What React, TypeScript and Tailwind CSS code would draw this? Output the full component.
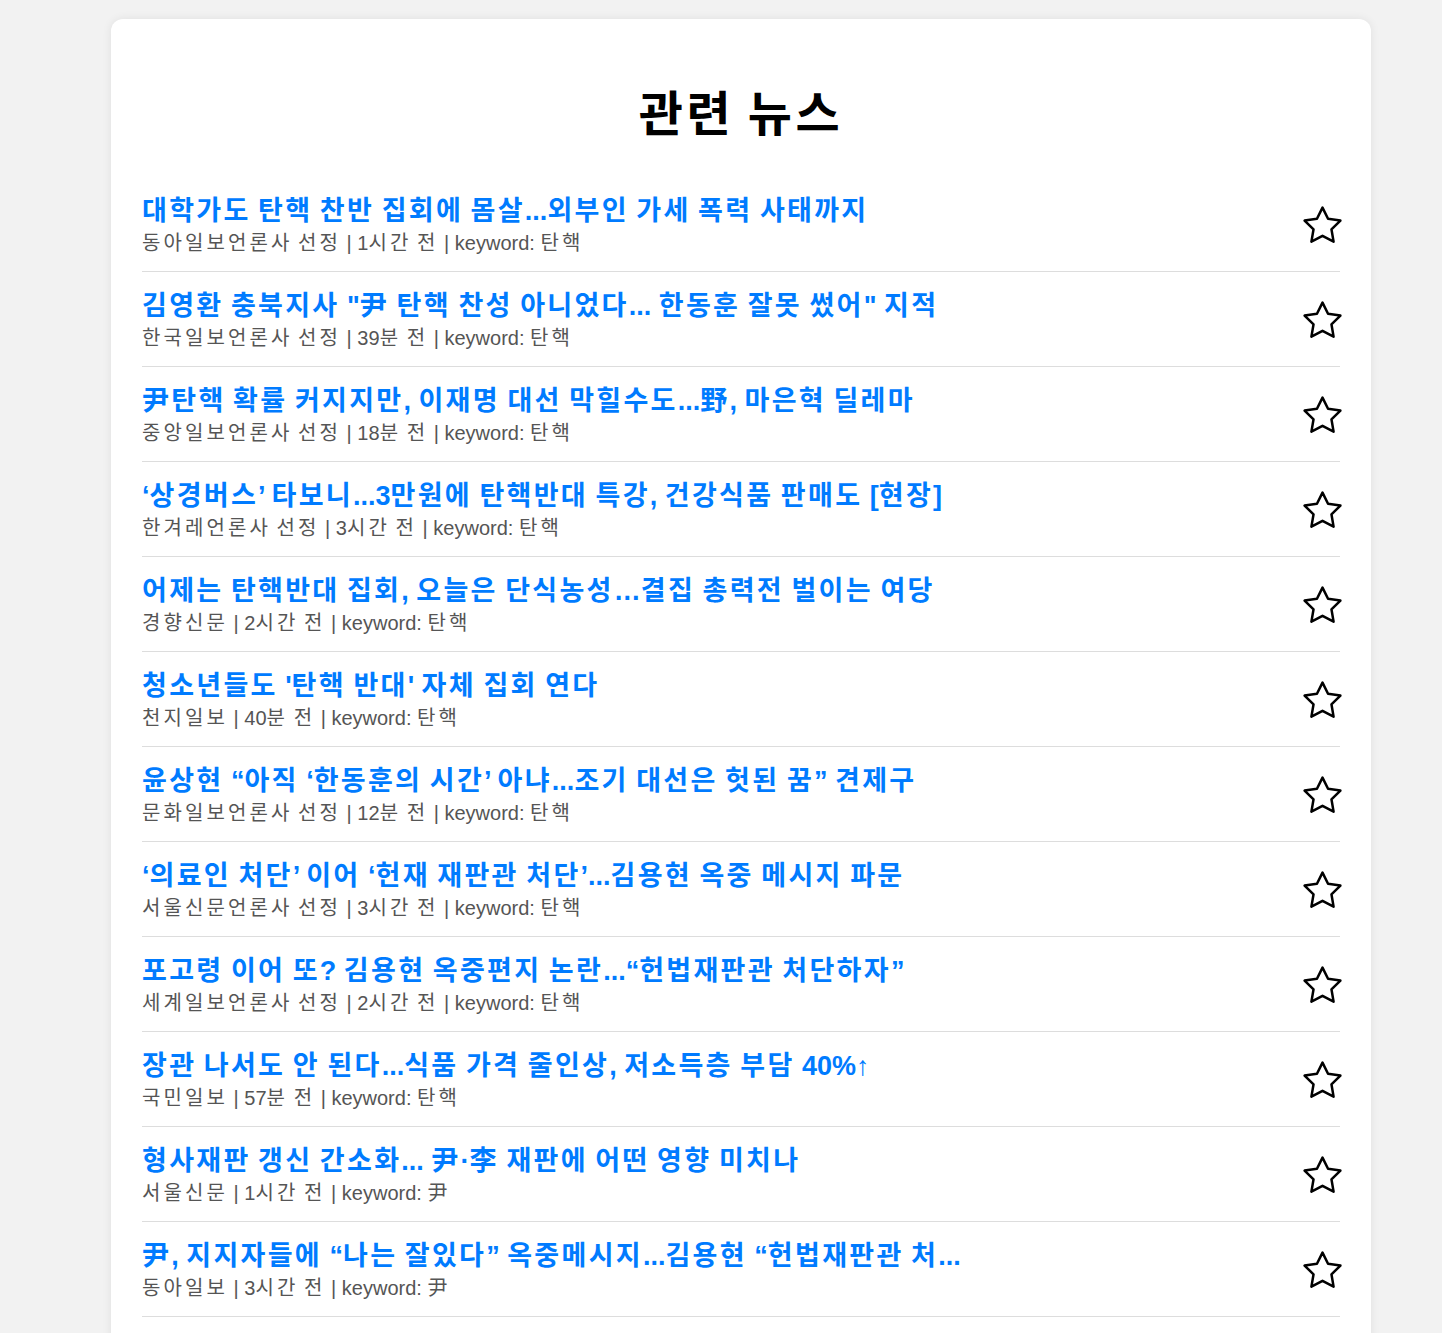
import type { ReactNode } from "react";

const news = [
  {
    title: "대학가도 탄핵 찬반 집회에 몸살...외부인 가세 폭력 사태까지",
    meta: "동아일보언론사 선정 | 1시간 전 | keyword: 탄핵",
  },
  {
    title: '김영환 충북지사 "尹 탄핵 찬성 아니었다... 한동훈 잘못 썼어" 지적',
    meta: "한국일보언론사 선정 | 39분 전 | keyword: 탄핵",
  },
  {
    title: "尹탄핵 확률 커지지만, 이재명 대선 막힐수도...野, 마은혁 딜레마",
    meta: "중앙일보언론사 선정 | 18분 전 | keyword: 탄핵",
  },
  {
    title: "‘상경버스’ 타보니...3만원에 탄핵반대 특강, 건강식품 판매도 [현장]",
    meta: "한겨레언론사 선정 | 3시간 전 | keyword: 탄핵",
  },
  {
    title: "어제는 탄핵반대 집회, 오늘은 단식농성…결집 총력전 벌이는 여당",
    meta: "경향신문 | 2시간 전 | keyword: 탄핵",
  },
  {
    title: "청소년들도 '탄핵 반대' 자체 집회 연다",
    meta: "천지일보 | 40분 전 | keyword: 탄핵",
  },
  {
    title: "윤상현 “아직 ‘한동훈의 시간’ 아냐...조기 대선은 헛된 꿈” 견제구",
    meta: "문화일보언론사 선정 | 12분 전 | keyword: 탄핵",
  },
  {
    title: "‘의료인 처단’ 이어 ‘헌재 재판관 처단’...김용현 옥중 메시지 파문",
    meta: "서울신문언론사 선정 | 3시간 전 | keyword: 탄핵",
  },
  {
    title: "포고령 이어 또? 김용현 옥중편지 논란...“헌법재판관 처단하자”",
    meta: "세계일보언론사 선정 | 2시간 전 | keyword: 탄핵",
  },
  {
    title: "장관 나서도 안 된다...식품 가격 줄인상, 저소득층 부담 40%↑",
    meta: "국민일보 | 57분 전 | keyword: 탄핵",
  },
  {
    title: "형사재판 갱신 간소화... 尹·李 재판에 어떤 영향 미치나",
    meta: "서울신문 | 1시간 전 | keyword: 尹",
  },
  {
    title: "尹, 지지자들에 “나는 잘있다” 옥중메시지...김용현 “헌법재판관 처...",
    meta: "동아일보 | 3시간 전 | keyword: 尹",
  },
];

// Hangul runs get a little extra tracking so they sit as wide as the original
function Spaced({ text, className }: { text: string; className: string }) {
  const parts = text.split(/([가-힣尹李野]+)/);
  const out: ReactNode[] = parts.map((p, i) =>
    /[가-힣尹李野]/.test(p) ? (
      <span key={i} className={className}>
        {p}
      </span>
    ) : (
      p
    )
  );
  return <>{out}</>;
}

function StarIcon() {
  return (
    <svg
      width="43"
      height="43"
      viewBox="0 0 24 24"
      fill="none"
      stroke="#000"
      strokeWidth="1.4"
      strokeLinejoin="round"
      strokeLinecap="round"
    >
      <polygon points="12,2 15.09,8.26 22,9.27 17,14.14 18.18,21.02 12,17.77 5.82,21.02 7,14.14 2,9.27 8.91,8.26" />
    </svg>
  );
}

export default function App() {
  return (
    <div
      className="min-h-screen bg-[#f2f2f2] pt-[19px] pl-[111px]"
      style={{ fontFamily: '"Liberation Sans", "Noto Sans CJK KR", sans-serif' }}
    >
      <div className="w-[1260px] bg-white rounded-[12px] shadow-[0_0_10px_rgba(0,0,0,0.08)] px-[31px] pt-[72px] pb-[40px]">
        {/* Header */}
        <h1 className="text-center text-[48px] leading-[48px] font-bold text-black mb-[38px]">
          <Spaced text="관련 뉴스" className="tracking-[0.075em]" />
        </h1>

        {/* News List */}
        <ul className="flex flex-col">
          {news.map((item, i) => (
            <li
              key={i}
              className="flex items-center justify-between pt-[16px] pb-[14px] border-b border-[#dddddd]"
            >
              <div className="flex flex-col">
                <a
                  href="#"
                  className="text-[27px] leading-[36px] font-bold text-[#007bff]"
                >
                  <Spaced text={item.title} className="tracking-[0.085em]" />
                </a>
                <span className="text-[20px] leading-[28px] text-[#555555]">
                  <Spaced text={item.meta} className="tracking-[0.155em]" />
                </span>
              </div>
              <button className="-mr-[4px] cursor-pointer">
                <StarIcon />
              </button>
            </li>
          ))}
        </ul>
      </div>
    </div>
  );
}
